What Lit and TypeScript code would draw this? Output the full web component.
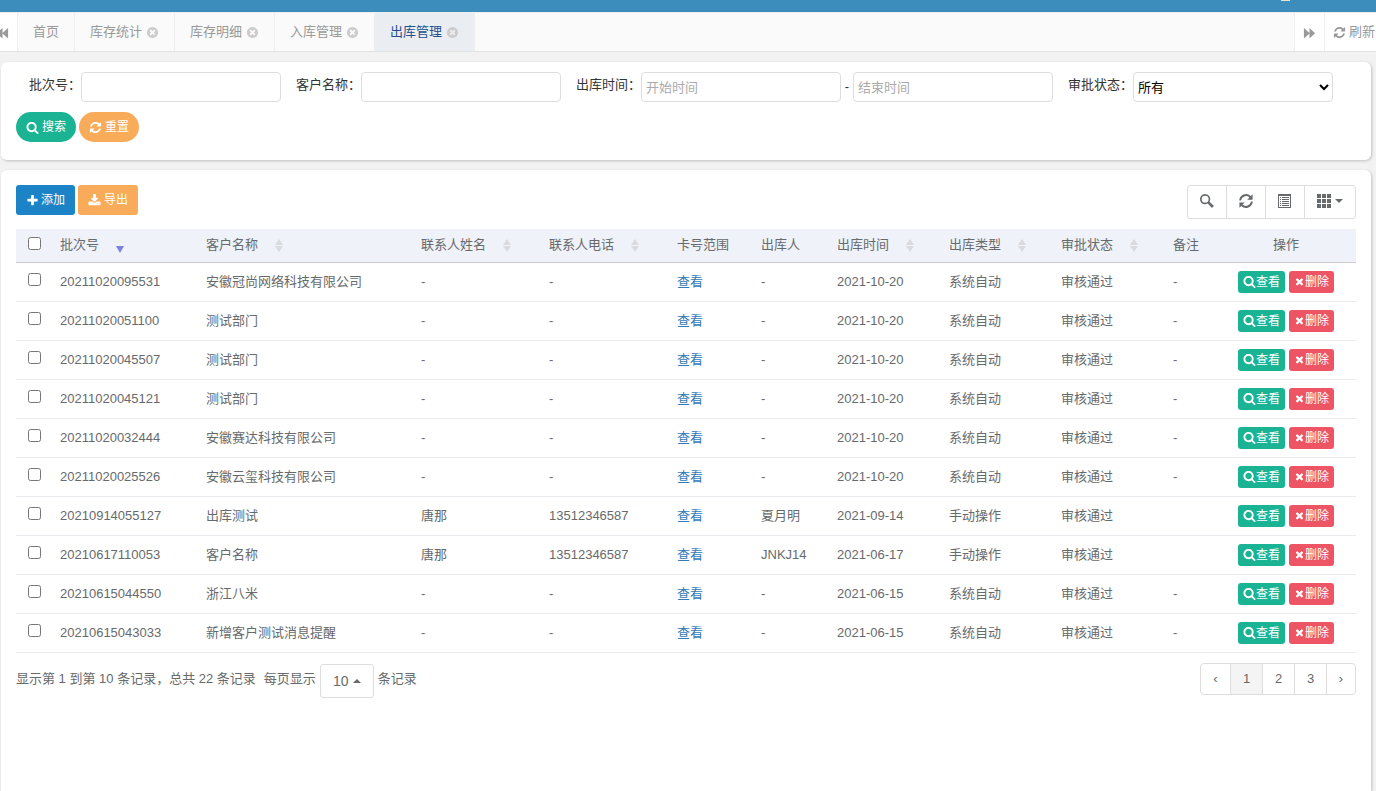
import { LitElement, html, css, svg } from "lit";
import { customElement, property } from "lit/decorators.js";

const ICONS: Record<string, unknown> = {
  search: svg`<path d="M1216 832q0-185-131.500-316.500t-316.500-131.500-316.500 131.500-131.500 316.500 131.500 316.500 316.500 131.500 316.500-131.500 131.500-316.500zm512 832q0 52-38 90t-90 38q-54 0-90-38l-343-342q-179 124-399 124-143 0-273.500-55.500t-225-150-150-225-55.500-273.500 55.500-273.500 150-225 225-150 273.500-55.500 273.500 55.500 225 150 150 225 55.500 273.500q0 220-124 399l343 343q37 37 37 90z"/>`,
  refresh: svg`<path d="M1639 1056q0 5-1 7-64 268-268 434.500t-478 166.500q-146 0-282.500-55t-243.500-157l-129 129q-19 19-45 19t-45-19-19-45v-448q0-26 19-45t45-19h448q26 0 45 19t19 45-19 45l-137 137q71 66 161 102t187 36q134 0 250-65t186-179q11-17 53-117 8-23 30-23h192q13 0 22.500 9.500t9.500 22.500zm25-800v448q0 26-19 45t-45 19h-448q-26 0-45-19t-19-45 19-45l138-138q-148-137-349-137-134 0-250 65t-186 179q-11 17-53 117-8 23-30 23h-199q-13 0-22.500-9.500t-9.500-22.500v-7q65-268 270-434.500t480-166.500q146 0 284 55.500t245 156.500l130-129q19-19 45-19t45 19 19 45z"/>`,
  plus: svg`<path d="M1600 736v192q0 40-28 68t-68 28h-416v416q0 40-28 68t-68 28h-192q-40 0-68-28t-28-68v-416h-416q-40 0-68-28t-28-68v-192q0-40 28-68t68-28h416v-416q0-40 28-68t68-28h192q40 0 68 28t28 68v416h416q40 0 68 28t28 68z"/>`,
  download: svg`<path d="M1344 1344q0-26-19-45t-45-19-45 19-19 45 19 45 45 19 45-19 19-45zm256 0q0-26-19-45t-45-19-45 19-19 45 19 45 45 19 45-19 19-45zm128-224v320q0 40-28 68t-68 28h-1472q-40 0-68-28t-28-68v-320q0-40 28-68t68-28h465l135 136q58 56 136 56t136-56l136-136h464q40 0 68 28t28 68zm-325-569q17 41-14 70l-448 448q-18 19-45 19t-45-19l-448-448q-31-29-14-70 17-39 59-39h256v-448q0-26 19-45t45-19h256q26 0 45 19t19 45v448h256q42 0 59 39z"/>`,
  times: svg`<path d="M1490 1322q0 40-28 68l-136 136q-28 28-68 28t-68-28l-294-294-294 294q-28 28-68 28t-68-28l-136-136q-28-28-28-68t28-68l294-294-294-294q-28-28-28-68t28-68l136-136q28-28 68-28t68 28l294 294 294-294q28-28 68-28t68 28l136 136q28 28 28 68t-28 68l-294 294 294 294q28 28 28 68z"/>`,
  close: svg`<path d="M1277 1122q0-26-19-45l-181-181 181-181q19-19 19-45 0-27-19-46l-90-90q-19-19-46-19-26 0-45 19l-181 181-181-181q-19-19-45-19-27 0-46 19l-90 90q-19 19-19 46 0 26 19 45l181 181-181 181q-19 19-19 45 0 27 19 46l90 90q19 19 46 19 26 0 45-19l181-181 181 181q19 19 45 19 27 0 46-19l90-90q19-19 19-46zm387-226q0 209-103 385.500t-279.500 279.500-385.500 103-385.500-103-279.500-279.500-103-385.500 103-385.500 279.500-279.500 385.500-103 385.500 103 279.500 279.500 103 385.500z"/>`,
  backward: svg`<path d="M1664 260v1472L900 1030v702L130 996 900 260v702z"/>`,
  forward: svg`<path d="M128 260v1472L892 1030v702L1662 996 892 260v702z"/>`,
  gSearch: svg`<path fill-rule="evenodd" d="M660 0a660 660 0 0 1 565 1000l500 480q60 60 0 120l-130 130q-60 60-120 0l-490-500A660 660 0 1 1 660 0zm0 220a440 440 0 1 0 0 880 440 440 0 0 0 0-880z"/>`,
  gRefresh: svg`<path d="M30 820A870 870 0 0 1 1500 260L1740 30V720H1060L1330 440A640 640 0 0 0 260 820zM1762 972A870 870 0 0 1 292 1532L52 1762V1072H732L462 1352A640 640 0 0 0 1532 972z"/>`,
  gList: svg`<path fill-rule="evenodd" d="M0 0h1664v1792H0zM128 256v1408h1408V256zM256 384h128v128H256zM512 384h896v128H512zM256 640h128v128H256zM512 640h896v128H512zM256 896h128v128H256zM512 896h896v128H512zM256 1152h128v128H256zM512 1152h896v128H512zM256 1408h128v128H256zM512 1408h896v128H512z"/>`,
  gGrid: svg`<path d="M0 0h512v512H0zM640 0h512v512H640zM1280 0h512v512h-512zM0 640h512v512H0zM640 640h512v512H640zM1280 640h512v512h-512zM0 1280h512v512H0zM640 1280h512v512H640zM1280 1280h512v512h-512z"/>`,
};

@customElement("ui-icon")
export class UiIcon extends LitElement {
  @property() name = "";
  static styles = css`
    :host { display: inline-flex; flex: none; width: 1em; height: 1em; }
    svg { width: 100%; height: 100%; fill: currentColor; overflow: visible; }
  `;
  render() {
    return html`<svg viewBox="0 0 1792 1792" aria-hidden="true">${ICONS[this.name]}</svg>`;
  }
}

interface Column { title: string; cls: string; sort?: "both" | "desc"; }

const COLUMNS: Column[] = [
  { title: "批次号", cls: "c-batch", sort: "desc" },
  { title: "客户名称", cls: "c-customer", sort: "both" },
  { title: "联系人姓名", cls: "c-contact", sort: "both" },
  { title: "联系人电话", cls: "c-contact", sort: "both" },
  { title: "卡号范围", cls: "c-range" },
  { title: "出库人", cls: "c-person" },
  { title: "出库时间", cls: "c-mid", sort: "both" },
  { title: "出库类型", cls: "c-mid", sort: "both" },
  { title: "审批状态", cls: "c-mid", sort: "both" },
  { title: "备注", cls: "c-note" },
];

const ROWS: string[][] = [
  ["20211020095531", "安徽冠尚网络科技有限公司", "-", "-", "-", "2021-10-20", "系统自动", "审核通过", "-"],
  ["20211020051100", "测试部门", "-", "-", "-", "2021-10-20", "系统自动", "审核通过", "-"],
  ["20211020045507", "测试部门", "-", "-", "-", "2021-10-20", "系统自动", "审核通过", "-"],
  ["20211020045121", "测试部门", "-", "-", "-", "2021-10-20", "系统自动", "审核通过", "-"],
  ["20211020032444", "安徽赛达科技有限公司", "-", "-", "-", "2021-10-20", "系统自动", "审核通过", "-"],
  ["20211020025526", "安徽云玺科技有限公司", "-", "-", "-", "2021-10-20", "系统自动", "审核通过", "-"],
  ["20210914055127", "出库测试", "唐那", "13512346587", "夏月明", "2021-09-14", "手动操作", "审核通过", ""],
  ["20210617110053", "客户名称", "唐那", "13512346587", "JNKJ14", "2021-06-17", "手动操作", "审核通过", ""],
  ["20210615044550", "浙江八米", "-", "-", "-", "2021-06-15", "系统自动", "审核通过", "-"],
  ["20210615043033", "新增客户测试消息提醒", "-", "-", "-", "2021-06-15", "系统自动", "审核通过", "-"],
];

const TABS = ["首页", "库存统计", "库存明细", "入库管理", "出库管理"];

@customElement("app-root")
export class AppRoot extends LitElement {
  static styles = css`
    :host {
      display: flex; flex-direction: column; min-height: 100vh; overflow: hidden;
      background: #f2f2f2; color: #676a6c;
      font: 13px/18px "Liberation Sans", "Noto Sans CJK SC", sans-serif;
    }
    * { box-sizing: border-box; }
    button, input, select { font: inherit; color: inherit; margin: 0; }
    button { cursor: pointer; }
    a { text-decoration: none; color: #337ab7; }
    .topbar { display: flex; justify-content: flex-end; height: 12px; padding-right: 86px; background: #3c8dbc; }
    .avatar { width: 9px; height: 1px; background: #e9e2cf; }
    .tabs {
      display: flex; height: 40px; background: #fafafa; color: #999;
      border-top: 1px solid #eee; border-bottom: 1px solid #e2e2e2;
    }
    .tab, .roll {
      display: flex; align-items: center; gap: 4px; padding: 0 15px;
      border: 0; border-right: 1px solid #eee; background: none; white-space: nowrap;
    }
    .tab ui-icon { color: #ccc; font-size: 13px; }
    .tab.active { background: #eaedf1; color: #23508e; }
    .roll { background: #fff; padding: 0; color: #999; }
    .roll.prev { width: 18px; justify-content: flex-start; }
    .roll.prev ui-icon { margin-left: -4px; }
    .roll.next { width: 31px; justify-content: center; margin-left: auto; border-left: 1px solid #eee; }
    .roll.reload { width: 51px; gap: 3px; padding-left: 8px; border-right: 0; overflow: hidden; }
    .card {
      background: #fff; border-radius: 6px; margin: 10px 5px 0 1px; padding: 10px 15px;
      box-shadow: 1px 1px 3px rgba(0, 0, 0, 0.2);
    }
    .search { padding-bottom: 18px; color: #333; }
    .fields { display: flex; gap: 15px; }
    .field { display: flex; align-items: flex-start; }
    .field label { padding-top: 4px; min-width: 65px; text-align: right; white-space: nowrap; }
    .field input, .field select {
      width: 200px; height: 30px; border: 1px solid #ddd; border-radius: 4px;
      background: #fff; padding: 0 4px; outline: 0;
    }
    .field select { padding: 0; color: #000; }
    .field input::placeholder { color: #aaa; opacity: 1; }
    .dash { width: 12px; text-align: center; line-height: 30px; }
    .actions { display: flex; gap: 3px; margin-top: 10px; }
    .btn {
      display: inline-flex; align-items: center; gap: 3px; height: 30px; padding: 0 10px;
      border: 0; border-radius: 3px; color: #fff; font-size: 12px; white-space: nowrap;
    }
    .btn ui-icon { font-size: 13px; }
    .pill { border-radius: 15px; }
    .green { background: #1ab394; }
    .orange { background: #f8ac59; }
    .blue { background: #1c84c6; gap: 2px; }
    .red { background: #ed5565; }
    .main { flex: 1; border-radius: 6px 6px 0 0; padding-top: 15px; }
    .toolbar { display: flex; justify-content: space-between; align-items: flex-start; }
    .toolbar .actions { margin: 0; }
    .group { display: flex; border: 1px solid #ddd; border-radius: 3px; height: 34px; }
    .group button {
      display: flex; align-items: center; justify-content: center; gap: 4px; width: 39px;
      border: 0; border-right: 1px solid #ddd; background: none; padding: 0 0 2px;
    }
    .group button:last-child { width: 50px; border-right: 0; }
    .group ui-icon { font-size: 14px; }
    .caret { border: 4px solid transparent; border-top-color: currentColor; border-bottom: 0; }
    .caret.up { border-top: 0; border-bottom: 4px solid currentColor; }
    table { width: 100%; table-layout: fixed; border-collapse: collapse; margin-top: 10px; }
    th, td { text-align: left; font-weight: 400; padding: 0 8px; height: 39px; border-bottom: 1px solid #e7eaec; white-space: nowrap; }
    th { height: 33px; background: #eff2f8; border-bottom-color: #ccc; }
    .c-check { width: 36px; padding: 0; text-align: center; }
    .c-check input { display: block; width: 13px; height: 13px; margin: 0 auto 4px 12px; }
    .c-batch { width: 146px; }
    .c-customer { width: 215px; }
    .c-contact { width: 128px; }
    .c-range { width: 84px; }
    .c-person { width: 76px; }
    .c-mid { width: 112px; }
    .c-note { width: 51px; }
    .c-ops { text-align: center; }
    .head { display: flex; align-items: center; gap: 17px; }
    .arrows { display: flex; flex-direction: column; gap: 1px; color: #d9dbde; }
    .arrows i { border: 4px solid transparent; border-bottom: 6px solid; border-top: 0; border-left-color: transparent; border-right-color: transparent; }
    .arrows i + i { border-top: 6px solid; border-bottom: 0; }
    .arrows.desc { color: #7a82e0; gap: 2px; }
    .arrows.desc i:first-child { visibility: hidden; }
    .arrows.desc i + i { border-top-width: 7px; }
    .ops { display: flex; justify-content: center; gap: 4px; }
    .ops .btn { height: 22px; gap: 0; padding: 0 5px; }
    .ops .red ui-icon { font-size: 11px; }
    .footer { display: flex; justify-content: space-between; align-items: flex-start; padding-top: 10px; }
    .summary { display: flex; align-items: center; gap: 4px; }
    .summary span { padding-bottom: 3px; }
    .summary .per { padding-left: 4px; }
    .size {
      display: flex; align-items: center; justify-content: center; gap: 4px; width: 54px; height: 34px;
      margin-top: 1px; border: 1px solid #ddd; border-radius: 3px; background: #fff; font-size: 14px;
    }
    .pages { display: flex; border: 1px solid #ddd; border-radius: 4px; overflow: hidden; }
    .pages a { width: 32px; line-height: 30px; text-align: center; color: #676a6c; border-left: 1px solid #ddd; }
    .pages a:first-child { border-left: 0; width: 29px; }
    .pages a:last-child { width: 29px; }
    .pages .current { background: #f4f4f4; }
  `;

  private renderHead(c: Column) {
    return html`<th class=${c.cls}><div class="head">${c.title}${c.sort
      ? html`<span class="arrows ${c.sort}"><i></i><i></i></span>` : ""}</div></th>`;
  }

  private renderRow(r: string[]) {
    return html`<tr>
      <td class="c-check"><input type="checkbox" aria-label=${r[0]} /></td>
      ${r.slice(0, 4).map((v) => html`<td>${v}</td>`)}
      <td><a href="#">查看</a></td>
      ${r.slice(4).map((v) => html`<td>${v}</td>`)}
      <td class="c-ops"><div class="ops">
        <button class="btn green"><ui-icon name="search"></ui-icon>查看</button>
        <button class="btn red"><ui-icon name="times"></ui-icon>删除</button>
      </div></td>
    </tr>`;
  }

  render() {
    return html`
      <header class="topbar"><span class="avatar"></span></header>
      <nav class="tabs">
        <button class="roll prev" aria-label="backward"><ui-icon name="backward"></ui-icon></button>
        ${TABS.map((t, i) => html`<button class="tab ${i === 4 ? "active" : ""}">${t}${i
          ? html`<ui-icon name="close"></ui-icon>` : ""}</button>`)}
        <button class="roll next" aria-label="forward"><ui-icon name="forward"></ui-icon></button>
        <button class="roll reload"><ui-icon name="refresh"></ui-icon>刷新</button>
      </nav>
      <form class="card search" @submit=${(e: Event) => e.preventDefault()}>
        <div class="fields">
          <div class="field"><label for="batch">批次号：</label><input id="batch" type="text" /></div>
          <div class="field"><label for="customer">客户名称：</label><input id="customer" type="text" /></div>
          <div class="field"><label for="start">出库时间：</label><input id="start" type="text" placeholder="开始时间" /><span class="dash">-</span><input type="text" placeholder="结束时间" aria-label="结束时间" /></div>
          <div class="field"><label for="status">审批状态：</label><select id="status"><option>所有</option></select></div>
        </div>
        <div class="actions">
          <button class="btn pill green"><ui-icon name="search"></ui-icon>搜索</button>
          <button class="btn pill orange" type="reset"><ui-icon name="refresh"></ui-icon>重置</button>
        </div>
      </form>
      <main class="card main">
        <div class="toolbar">
          <div class="actions">
            <button class="btn blue"><ui-icon name="plus"></ui-icon>添加</button>
            <button class="btn orange"><ui-icon name="download"></ui-icon>导出</button>
          </div>
          <div class="group">
            <button aria-label="search"><ui-icon name="gSearch"></ui-icon></button>
            <button aria-label="refresh"><ui-icon name="gRefresh"></ui-icon></button>
            <button aria-label="toggle"><ui-icon name="gList"></ui-icon></button>
            <button aria-label="columns"><ui-icon name="gGrid"></ui-icon><span class="caret"></span></button>
          </div>
        </div>
        <table>
          <thead><tr>
            <th class="c-check"><input type="checkbox" aria-label="all" /></th>
            ${COLUMNS.map((c) => this.renderHead(c))}
            <th class="c-ops">操作</th>
          </tr></thead>
          <tbody>${ROWS.map((r) => this.renderRow(r))}</tbody>
        </table>
        <div class="footer">
          <div class="summary">
            <span>显示第 1 到第 10 条记录，总共 22 条记录</span><span class="per">每页显示</span>
            <button class="size">10<i class="caret up"></i></button>
            <span>条记录</span>
          </div>
          <nav class="pages">
            <a href="#">‹</a><a href="#" class="current">1</a><a href="#">2</a><a href="#">3</a><a href="#">›</a>
          </nav>
        </div>
      </main>
    `;
  }
}
